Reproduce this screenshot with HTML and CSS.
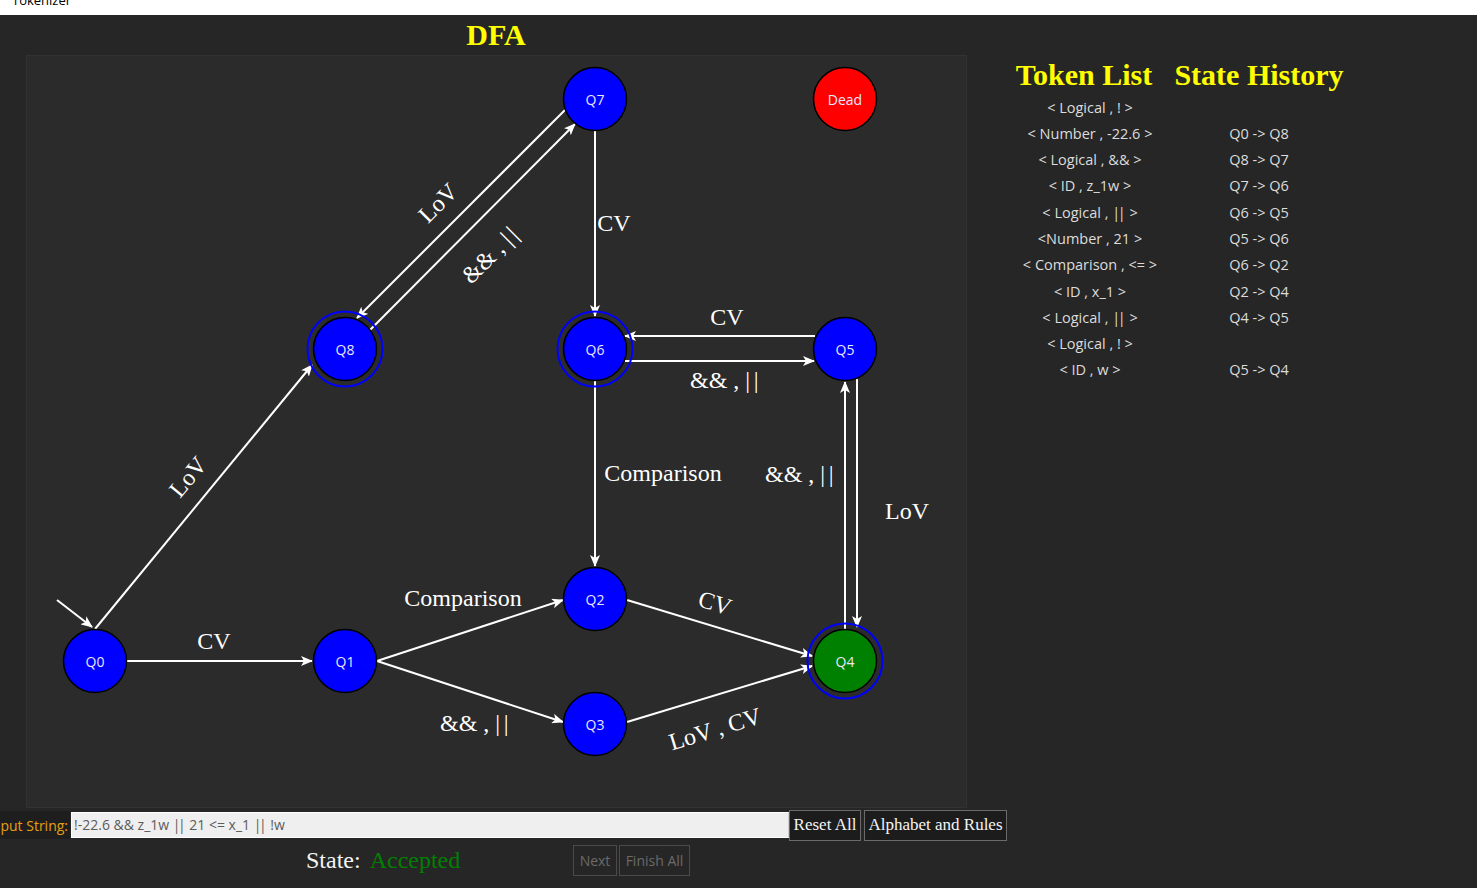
FILE: index.html
```html
<!DOCTYPE html>
<html>
<head>
<meta charset="utf-8">
<title>Tokenizer</title>
<link rel="stylesheet" href="styles.css">
</head>
<body>
<div class="titlebar"><span class="title-text">Tokenizer</span></div>
<div class="main">
  <div class="left">
    <h1 class="dfa-title">DFA</h1>
    <div class="canvas">
      <svg class="graph" viewBox="26 55 941 753" width="941" height="753">
        <defs>
          <marker id="ah" viewBox="0 0 12 10" refX="11" refY="5" markerWidth="12" markerHeight="10" markerUnits="userSpaceOnUse" orient="auto">
            <path class="arrowhead" d="M0,0 L12,5 L0,10 L3,5 Z"/>
          </marker>
        </defs>
        <g class="edges" marker-end="url(#ah)">
          <line x1="57" y1="600" x2="92" y2="627"/>
          <line x1="95" y1="629" x2="312" y2="365"/>
          <line x1="565" y1="110" x2="357" y2="318"/>
          <line x1="370" y1="330" x2="575" y2="124"/>
          <line x1="595" y1="131" x2="595" y2="316"/>
          <line x1="815" y1="336" x2="625" y2="336"/>
          <line x1="625" y1="361" x2="814" y2="361"/>
          <line x1="595" y1="381" x2="595" y2="566"/>
          <line x1="845" y1="629" x2="845" y2="382"/>
          <line x1="857" y1="379" x2="857" y2="627"/>
          <line x1="127" y1="661" x2="312" y2="661"/>
          <line x1="377" y1="661" x2="563" y2="600"/>
          <line x1="377" y1="661" x2="563" y2="722"/>
          <line x1="627" y1="600" x2="812" y2="656"/>
          <line x1="627" y1="722" x2="812" y2="666"/>
        </g>
        <g class="labels">
          <text x="438" y="203" transform="rotate(-45 438 203)">LoV</text>
          <text x="491" y="254" transform="rotate(-45 491 254)">&amp;&amp; , <tspan class="bars">||</tspan></text>
          <text x="614" y="223">CV</text>
          <text x="727" y="317">CV</text>
          <text x="726" y="380">&amp;&amp; , <tspan class="bars">||</tspan></text>
          <text x="663" y="473">Comparison</text>
          <text x="801" y="474">&amp;&amp; , <tspan class="bars">||</tspan></text>
          <text x="907" y="511">LoV</text>
          <text x="188" y="477" transform="rotate(-50 188 477)">LoV</text>
          <text x="214" y="641">CV</text>
          <text x="463" y="598">Comparison</text>
          <text x="476" y="723">&amp;&amp; , <tspan class="bars">||</tspan></text>
          <text x="715" y="603" transform="rotate(17 715 603)">CV</text>
          <text x="715" y="729" transform="rotate(-17 715 729)">LoV , CV</text>
        </g>
        <g class="nodes">
          <circle class="state-node" cx="595" cy="99" r="31.5"/><text x="595" y="99">Q7</text>
          <circle class="state-node dead" cx="845" cy="99" r="31.5"/><text x="845" y="99">Dead</text>
          <circle class="ring" cx="345" cy="349" r="37.5"/><circle class="state-node" cx="345" cy="349" r="31.5"/><text x="345" y="349">Q8</text>
          <circle class="ring" cx="595" cy="349" r="37.5"/><circle class="state-node" cx="595" cy="349" r="31.5"/><text x="595" y="349">Q6</text>
          <circle class="state-node" cx="845" cy="349" r="31.5"/><text x="845" y="349">Q5</text>
          <circle class="state-node" cx="95" cy="661" r="31.5"/><text x="95" y="661">Q0</text>
          <circle class="state-node" cx="345" cy="661" r="31.5"/><text x="345" y="661">Q1</text>
          <circle class="state-node" cx="595" cy="599" r="31.5"/><text x="595" y="599">Q2</text>
          <circle class="state-node" cx="595" cy="724" r="31.5"/><text x="595" y="724">Q3</text>
          <circle class="ring" cx="845" cy="661" r="37.5"/><circle class="state-node current" cx="845" cy="661" r="31.5"/><text x="845" y="661">Q4</text>
        </g>
      </svg>
    </div>
    <div class="input-row">
      <label class="input-label"><span>Input String:</span></label>
      <div class="input-box">!-22.6 &amp;&amp; z_1w <span class="pipes">||</span> 21 &lt;= x_1 <span class="pipes">||</span> !w</div>
      <button class="btn btn-reset">Reset All</button>
      <button class="btn btn-rules">Alphabet and Rules</button>
    </div>
    <div class="state-row">
      <div class="state"><span class="state-label">State:</span><span class="state-value">Accepted</span></div>
      <button class="btn-off btn-next">Next</button>
      <button class="btn-off btn-finish">Finish All</button>
    </div>
  </div>
  <div class="right">
    <div class="lists">
      <h2 class="head head-tokens">Token List</h2>
      <h2 class="head">State History</h2>
      <div class="cell">&lt; Logical , ! &gt;</div><div class="cell"></div>
      <div class="cell">&lt; Number , -22.6 &gt;</div><div class="cell">Q0 -&gt; Q8</div>
      <div class="cell">&lt; Logical , &amp;&amp; &gt;</div><div class="cell">Q8 -&gt; Q7</div>
      <div class="cell">&lt; ID , z_1w &gt;</div><div class="cell">Q7 -&gt; Q6</div>
      <div class="cell">&lt; Logical , <span class="pipes">||</span> &gt;</div><div class="cell">Q6 -&gt; Q5</div>
      <div class="cell">&lt;Number , 21 &gt;</div><div class="cell">Q5 -&gt; Q6</div>
      <div class="cell">&lt; Comparison , &lt;= &gt;</div><div class="cell">Q6 -&gt; Q2</div>
      <div class="cell">&lt; ID , x_1 &gt;</div><div class="cell">Q2 -&gt; Q4</div>
      <div class="cell">&lt; Logical , <span class="pipes">||</span> &gt;</div><div class="cell">Q4 -&gt; Q5</div>
      <div class="cell">&lt; Logical , ! &gt;</div><div class="cell"></div>
      <div class="cell">&lt; ID , w &gt;</div><div class="cell">Q5 -&gt; Q4</div>
    </div>
  </div>
</div>
</body>
</html>
```

FILE: styles.css
```css
html, body {
  margin: 0;
  padding: 0;
}
body {
  width: 1477px;
  height: 888px;
  overflow: hidden;
  background: #262626;
  font-family: "Open Sans", "Noto Sans", sans-serif;
}
.titlebar {
  height: 15px;
  background: #ffffff;
  overflow: hidden;
}
.title-text {
  display: block;
  margin: -6px 0 0 12px;
  font-size: 13px;
  line-height: 13px;
  color: #000;
}
.main {
  display: flex;
  height: 873px;
}
.left {
  width: 1010px;
  flex: none;
  display: flex;
  flex-direction: column;
}
.dfa-title {
  margin: 0;
  height: 40px;
  width: 992px;
  text-align: center;
  font-family: "Liberation Serif", serif;
  font-weight: bold;
  font-size: 30px;
  line-height: 39px;
  color: #ffff00;
}
.canvas {
  margin-left: 26px;
  width: 941px;
  height: 753px;
  background: #2b2b2b;
  box-shadow: inset 0 0 0 1px #323232;
}
.graph {
  display: block;
}
.arrowhead {
  fill: #ffffff;
}
.edges line {
  stroke: #ffffff;
  stroke-width: 2;
}
.labels text {
  font-family: "Liberation Serif", serif;
  font-size: 24px;
  fill: #ffffff;
  text-anchor: middle;
  dominant-baseline: central;
}
.labels .bars {
  letter-spacing: 3.5px;
}
.state-node {
  fill: #0000ff;
  stroke: #000000;
  stroke-width: 1.5;
}
.state-node.dead {
  fill: #ff0000;
}
.state-node.current {
  fill: #008000;
}
.ring {
  fill: none;
  stroke: #0000ff;
  stroke-width: 2;
}
.nodes text {
  font-family: "Open Sans", "Noto Sans", sans-serif;
  font-size: 14px;
  fill: #e8e8ff;
  text-anchor: middle;
  dominant-baseline: central;
}
.pipes {
  letter-spacing: -2.5px;
  margin-right: 2.5px;
}
.input-row {
  height: 34px;
  display: flex;
  align-items: center;
}
.input-label {
  width: 70px;
  height: 28px;
  flex: none;
  display: flex;
  align-items: center;
  justify-content: flex-end;
  overflow: hidden;
  white-space: nowrap;
  background: #1e1e1e;
  color: #e6a014;
  font-size: 14px;
}
.input-label span {
  padding-right: 2px;
}
.input-box {
  margin-left: 1px;
  width: 714px;
  height: 24px;
  flex: none;
  background: #efefef;
  border: 1px solid #ffffff;
  border-right-color: #cfcfcf;
  padding-left: 2px;
  font-size: 14px;
  line-height: 24px;
  color: #5c5c5c;
  white-space: nowrap;
}
.btn {
  height: 31px;
  flex: none;
  margin: 0;
  padding: 0;
  background: #1c1c1c;
  border: 1px solid #6a6a6a;
  color: #f4f4f4;
  font-family: "Liberation Serif", serif;
  font-size: 17px;
}
.btn-reset {
  width: 72px;
}
.btn-rules {
  width: 143px;
  margin-left: 3px;
}
.state-row {
  height: 36px;
  display: flex;
  align-items: center;
}
.state {
  margin-left: 306px;
  width: 267px;
  flex: none;
  font-family: "Liberation Serif", serif;
  font-size: 24px;
  line-height: 30px;
}
.state-label {
  color: #f4f4f4;
  margin-right: 9px;
}
.state-value {
  color: #008000;
}
.btn-off {
  height: 31px;
  flex: none;
  margin: 0;
  padding: 0;
  background: #262626;
  border: 1px solid #4a4a4a;
  color: #6a6a6a;
  font-family: "Open Sans", "Noto Sans", sans-serif;
  font-size: 14px;
}
.btn-next {
  width: 44px;
}
.btn-finish {
  width: 71px;
  margin-left: 2px;
}
.right {
  padding-top: 42px;
}
.lists {
  display: grid;
  grid-template-columns: 160px 178px;
  grid-template-rows: 37.5px;
  grid-auto-rows: 26.3px;
}
.head {
  margin: 0;
  height: 36px;
  font-family: "Liberation Serif", serif;
  font-weight: bold;
  font-size: 30px;
  line-height: 36px;
  color: #ffff00;
  text-align: center;
  white-space: nowrap;
}
.head-tokens {
  padding-right: 12px;
}
.cell {
  font-size: 14.5px;
  line-height: 26.3px;
  color: #dcdcdc;
  text-align: center;
  white-space: nowrap;
}
```
